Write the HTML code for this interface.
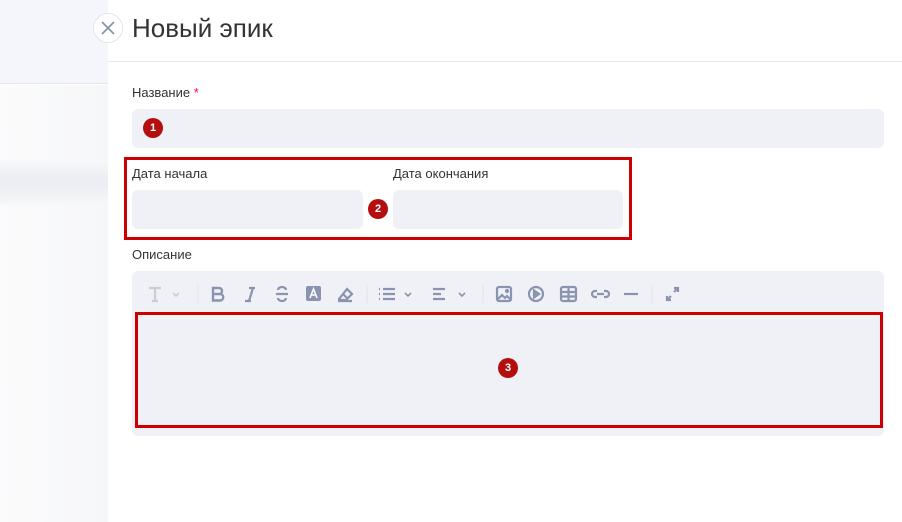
<!DOCTYPE html>
<html><head><meta charset="utf-8"><style>
*{margin:0;padding:0;box-sizing:border-box}
body{width:902px;height:522px;overflow:hidden;background:#fff;font-family:"Liberation Sans",sans-serif;position:relative;color:#333}
.abs{position:absolute}
.in{background:#f0f1f6;border-radius:6px}
.lbl{font-size:13px;color:#333}
.badge{width:20px;height:20px;border-radius:50%;background:#b40f0f;color:#fff;font-size:11px;font-weight:bold;text-align:center;line-height:20px}
.red{border:3px solid #c00;}
svg{position:absolute}
</style></head><body>
<div class="abs" style="left:0;top:0;width:108px;height:84px;background:#f4f6fb;border-bottom:1px solid #e2e5ee"></div>
<div class="abs" style="left:0;top:85px;width:108px;height:437px;background:linear-gradient(90deg,#fbfbfc,#f6f7f9)"></div>
<div class="abs" style="left:0;top:160px;width:108px;height:45px;background:linear-gradient(180deg,#f7f8fa,#eceef3 40%,#eceef3 60%,#f7f8fa)"></div>
<div class="abs" style="left:108px;top:0;width:794px;height:522px;background:#fff"></div>
<div class="abs" style="left:108px;top:61px;width:794px;height:1px;background:#e4e6ee"></div>
<div class="abs" style="left:93px;top:13px;width:30px;height:30px;border-radius:50%;background:#fff;border:1px solid #e2e5ec"></div>
<svg style="left:100px;top:20px" width="16" height="16"><path d="M2 2L14 14M14 2L2 14" stroke="#8a94ad" stroke-width="1.8"/></svg>
<div class="abs" style="left:132px;top:13px;font-size:26px;color:#333">Новый эпик</div>
<div class="abs lbl" style="left:132px;top:85px">Название <span style="color:#f06">*</span></div>
<div class="abs in" style="left:132px;top:109px;width:752px;height:39px"></div>
<div class="abs badge" style="left:143px;top:118px">1</div>
<div class="abs red" style="left:124px;top:157px;width:508px;height:83px"></div>
<div class="abs lbl" style="left:132px;top:166px">Дата начала</div>
<div class="abs lbl" style="left:393px;top:166px">Дата окончания</div>
<div class="abs in" style="left:132px;top:190px;width:231px;height:39px"></div>
<div class="abs in" style="left:393px;top:190px;width:230px;height:39px"></div>
<div class="abs badge" style="left:368px;top:199px">2</div>
<div class="abs lbl" style="left:132px;top:247px">Описание</div>
<div class="abs in" style="left:132px;top:271px;width:752px;height:165px"></div>
<svg style="left:132px;top:271px" width="600" height="42" fill="none" stroke="#8a93b0" stroke-width="2.2">
<path d="M17 17h12M23 17v13M20 30h6" stroke="#c8cdda"/><path d="M41 22l3 3 3-3" stroke="#c8cdda" stroke-width="1.6"/>
<line x1="66" y1="14" x2="66" y2="32" stroke="#e0e3ea" stroke-width="1"/>
<path d="M81 17h6a3 3 0 0 1 0 6h-6zM81 23h7a3.2 3.2 0 0 1 0 6.5h-7z" stroke-width="2.4"/>
<path d="M117 17h6M113 30h6M121 17l-4 13"/>
<path d="M144 23h12M146 19a4 3 0 0 1 8 0M146 27a4 3 0 0 0 8 0"/>
<rect x="174" y="15" width="15" height="15" rx="2" fill="#8a93b0" stroke="none"/><path d="M178 27l3.5-9 3.5 9M179.5 24h4" stroke="#fff" stroke-width="1.6"/>
<path d="M207 28l8-10 5 5-6 6h-7zM206 30h14M211 23l5 5"/>
<line x1="235" y1="14" x2="235" y2="32" stroke="#e0e3ea" stroke-width="1"/>
<path d="M251 18h12M251 23h12M251 28h12M247 18h1M247 23h1M247 28h1"/><path d="M273 22l3 3 3-3" stroke-width="1.6"/>
<path d="M301 18h12M301 23h8M301 28h12"/><path d="M327 22l3 3 3-3" stroke-width="1.6"/>
<line x1="351" y1="14" x2="351" y2="32" stroke="#e0e3ea" stroke-width="1"/>
<rect x="365" y="16" width="14" height="14" rx="2"/><path d="M366 28l4-4 3 3 2-2 4 4"/><circle cx="375" cy="20" r="1"/>
<circle cx="404" cy="23" r="7"/><path d="M402 19.5v7l5-3.5z" fill="#8a93b0"/>
<rect x="429" y="16" width="15" height="14" rx="2"/><path d="M429 21h15M429 25.5h15M436.5 16v14"/>
<path d="M465 20h-2a3 3 0 0 0 0 6h2M472 20h2a3 3 0 0 1 0 6h-2M465 23h7"/>
<path d="M492 23h14"/>
<line x1="520" y1="14" x2="520" y2="32" stroke="#e0e3ea" stroke-width="1"/>
<path d="M535 29l4-4M535 25v4h4M546 17l-4 4M546 21v-4h-4"/>
</svg>
<div class="abs red" style="left:135px;top:312px;width:748px;height:116px"></div>
<div class="abs badge" style="left:498px;top:358px">3</div>
</body></html>
